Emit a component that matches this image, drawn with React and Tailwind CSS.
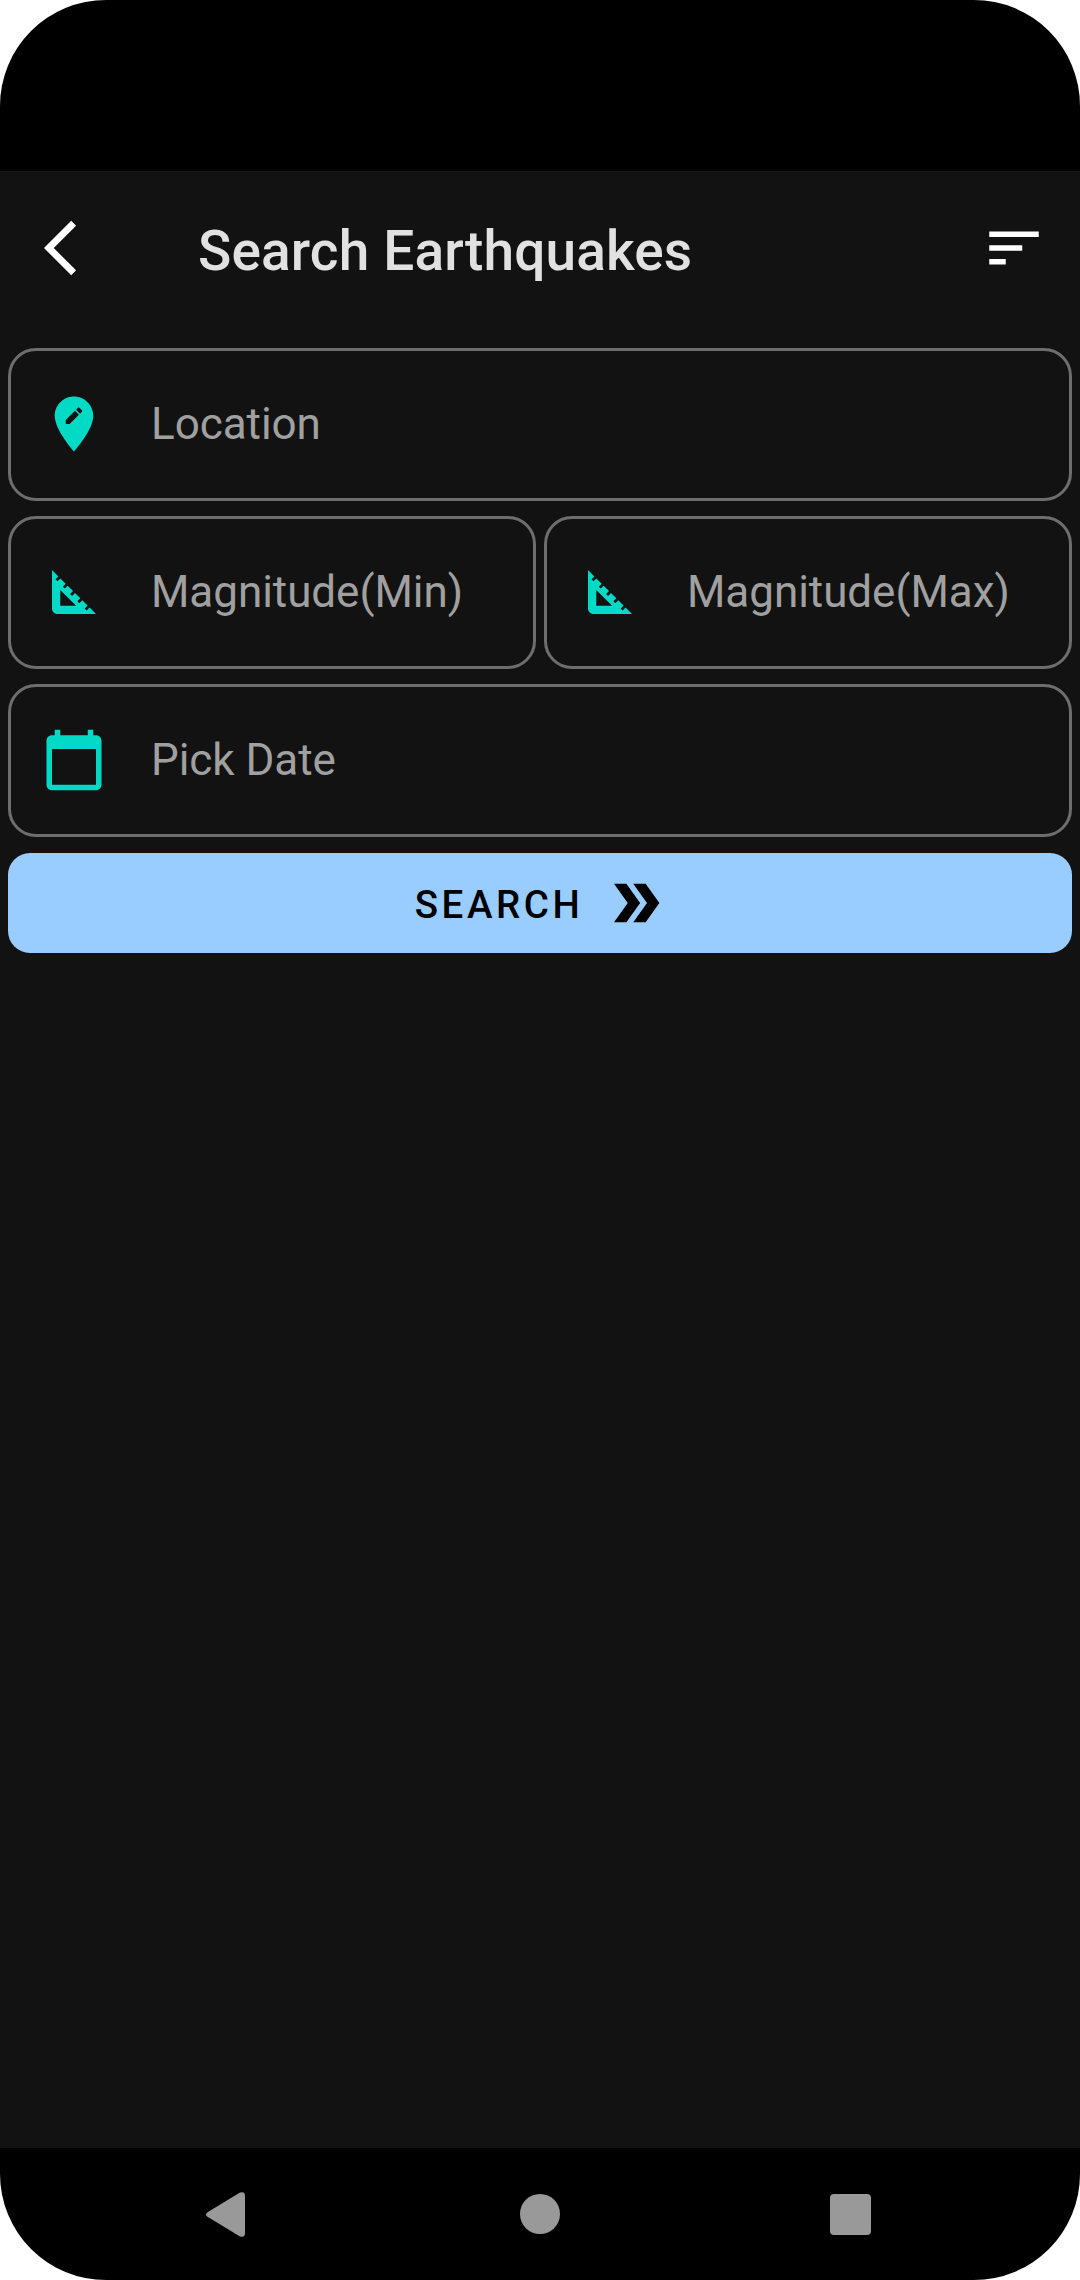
const PIN =
  "M12 2C8.14 2 5 5.14 5 9c0 5.25 7 13 7 13s7-7.75 7-13c0-3.86-3.14-7-7-7zm-1.56 10H9v-1.44l3.35-3.34 1.43 1.43L10.44 12zm4.45-4.45l-.7.7-1.44-1.44.7-.7c.15-.15.39-.15.54 0l.9.9c.15.15.15.39 0 .54z";
const SET_SQUARE =
  "M17.66 17.66l-1.06 1.06-.71-.71 1.06-1.06-1.94-1.94-1.06 1.06-.71-.71 1.06-1.06-1.94-1.94-1.06 1.06-.71-.71 1.06-1.06L9.7 9.7l-1.06 1.06-.71-.71 1.06-1.06-1.94-1.94-1.06 1.06-.71-.71 1.06-1.06L4 4v14c0 1.1.9 2 2 2h14l-2.34-2.34zM7 17v-5.76L12.76 17H7z";
const CALENDAR =
  "M20 3h-1V1h-2v2H7V1H5v2H4c-1.1 0-2 .9-2 2v16c0 1.1.9 2 2 2h16c1.1 0 2-.9 2-2V5c0-1.1-.9-2-2-2zm0 18H4V8h16v13z";
const BACK = "M11.67 3.87L9.9 2.1 0 12l9.9 9.9 1.77-1.77L3.54 12z";
const SORT = "M3 18h6v-2H3v2zM3 6v2h18V6H3zm0 7h12v-2H3v2z";
const DOUBLE_ARROW = "M15.5 5H11l5 7-5 7h4.5l5-7zM8.5 5H4l5 7-5 7h4.5l5-7z";

function Icon({ d, className = "" }) {
  return (
    <svg viewBox="0 0 24 24" fill="currentColor" className={"size-[66px] shrink-0 " + className}>
      <path d={d} />
    </svg>
  );
}

function Field({ icon, label }) {
  return (
    <div className="flex h-[153px] flex-1 items-center rounded-[28px] border-[3px] border-[#6e6e6e] pb-px pl-[30px]">
      <Icon d={icon} className="text-[#03dac5]" />
      <span className="ml-11 whitespace-nowrap text-[44px] leading-[52px] tracking-[-0.05px] text-[#a0a0a0]">
        {label}
      </span>
    </div>
  );
}

export default function App() {
  return (
    <div className="h-[2280px] w-[1080px] bg-white font-['Roboto',sans-serif]">
      <div className="flex h-full flex-col overflow-hidden rounded-[106px] bg-black">
        <div className="h-[171px] shrink-0" />
        <main className="flex flex-1 flex-col bg-[#121212]">
          <header className="flex h-[154px] items-center pr-[33px] pl-11">
            <Icon d={BACK} className="text-white" />
            <h1 className="ml-[88px] flex-1 pt-1.5 text-[55px] leading-[64px] font-medium tracking-[0.13px] text-[#e1e1e1]">
              Search Earthquakes
            </h1>
            <Icon d={SORT} className="text-white" />
          </header>
          <form className="mt-[23px] flex flex-col gap-[15px] px-2">
            <div className="flex">
              <Field icon={PIN} label="Location" />
            </div>
            <div className="flex gap-2">
              <Field icon={SET_SQUARE} label="Magnitude(Min)" />
              <Field icon={SET_SQUARE} label="Magnitude(Max)" />
            </div>
            <div className="flex">
              <Field icon={CALENDAR} label="Pick Date" />
            </div>
            <button
              type="button"
              className="mt-px flex h-[100px] items-center justify-center gap-[20px] rounded-[22px] bg-[#99ccff] pl-1 text-black"
            >
              <span className="pt-1 text-[38.5px] leading-[46px] font-medium tracking-[0.092em]">SEARCH</span>
              <Icon d={DOUBLE_ARROW} />
            </button>
          </form>
        </main>
        <nav className="flex h-[132px] shrink-0 items-center pl-[206px] text-[#999999]">
          <svg viewBox="0 0 39 45" className="h-[45px] w-[39px]" fill="currentColor">
            <path d="M1.5 20.2 34 .6q5-1.6 5 3.4v37q0 5-5 3.4L1.5 24.8q-3-2.3 0-4.6z" />
          </svg>
          <span className="ml-[275px] size-10 rounded-full bg-[#999999]" />
          <span className="ml-[270px] size-[41px] rounded-[4px] bg-[#999999]" />
        </nav>
      </div>
    </div>
  );
}
